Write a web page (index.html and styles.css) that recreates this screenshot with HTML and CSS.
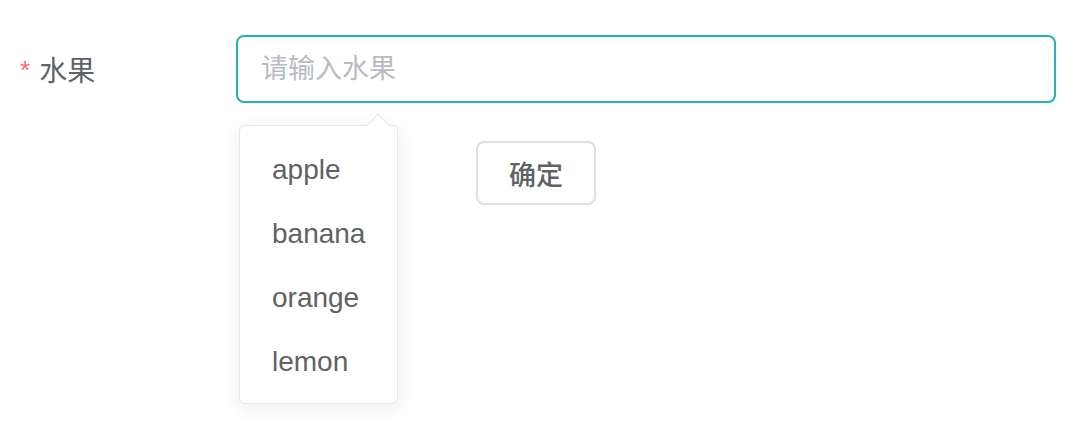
FILE: index.html
```html
<!DOCTYPE html>
<html lang="zh">
<head>
<meta charset="utf-8">
<link rel="stylesheet" href="styles.css">
</head>
<body>
<form class="form">
  <div class="form-item">
    <label class="label"><span class="req">*</span>水果</label>
    <div class="control">
      <input class="input" type="text" placeholder="请输入水果">
      <div class="dropdown">
        <span class="arrow"></span>
        <ul class="list">
          <li class="item">apple</li>
          <li class="item">banana</li>
          <li class="item">orange</li>
          <li class="item">lemon</li>
        </ul>
      </div>
    </div>
  </div>
  <div class="actions">
    <button class="btn" type="button">确定</button>
  </div>
</form>
</body>
</html>
```

FILE: styles.css
```css
* { box-sizing: border-box; }
html, body { margin: 0; background: #fff; }
body {
  min-height: 436px;
  font-family: "Liberation Sans", "Noto Sans CJK SC", sans-serif;
  color: #606266;
}
.form { padding-top: 35px; min-height: 436px; }
.form-item {
  display: flex;
  align-items: center;
  height: 68px;
}
.label {
  width: 236px;
  padding-left: 20px;
  font-size: 28px;
  color: #606266;
  display: flex;
  align-items: center;
}
.req {
  color: #f56c6c;
  font-size: 26px;
  margin-right: 9px;
  position: relative;
  top: 1px;
}
.control {
  position: relative;
  width: 820px;
  height: 68px;
}
.input {
  width: 100%;
  height: 100%;
  border: 2px solid #22b4b0;
  border-radius: 8px;
  padding: 0 23px;
  font-family: "Liberation Sans", "Noto Sans CJK SC", sans-serif;
  font-size: 26px;
  color: #606266;
  outline: none;
  background: #fff;
}
.input::placeholder { color: #b8bbc2; font-size: 27px; }
.dropdown {
  position: absolute;
  left: 3px;
  top: 90px;
  width: 159px;
  background: #fff;
  border: 1px solid #e4e7ed;
  border-radius: 6px;
  box-shadow: 0 4px 20px rgba(0, 0, 0, 0.08);
  z-index: 2;
}
.arrow {
  position: absolute;
  top: -9px;
  left: 130px;
  width: 16px;
  height: 16px;
  background: #fff;
  border-left: 1px solid #e4e7ed;
  border-top: 1px solid #e4e7ed;
  transform: rotate(45deg);
}
.list {
  list-style: none;
  margin: 0;
  padding: 12px 0 9px;
}
.item {
  height: 64px;
  line-height: 64px;
  padding-left: 32px;
  font-size: 28px;
  color: #606266;
}
.actions {
  margin-top: 38px;
  padding-left: 476px;
}
.btn {
  width: 120px;
  height: 64px;
  border: 2px solid #dcdfe6;
  border-radius: 8px;
  background: #fff;
  color: #606266;
  font-family: "Liberation Sans", "Noto Sans CJK SC", sans-serif;
  font-size: 27px;
  font-weight: 500;
  padding: 0;
}
```
